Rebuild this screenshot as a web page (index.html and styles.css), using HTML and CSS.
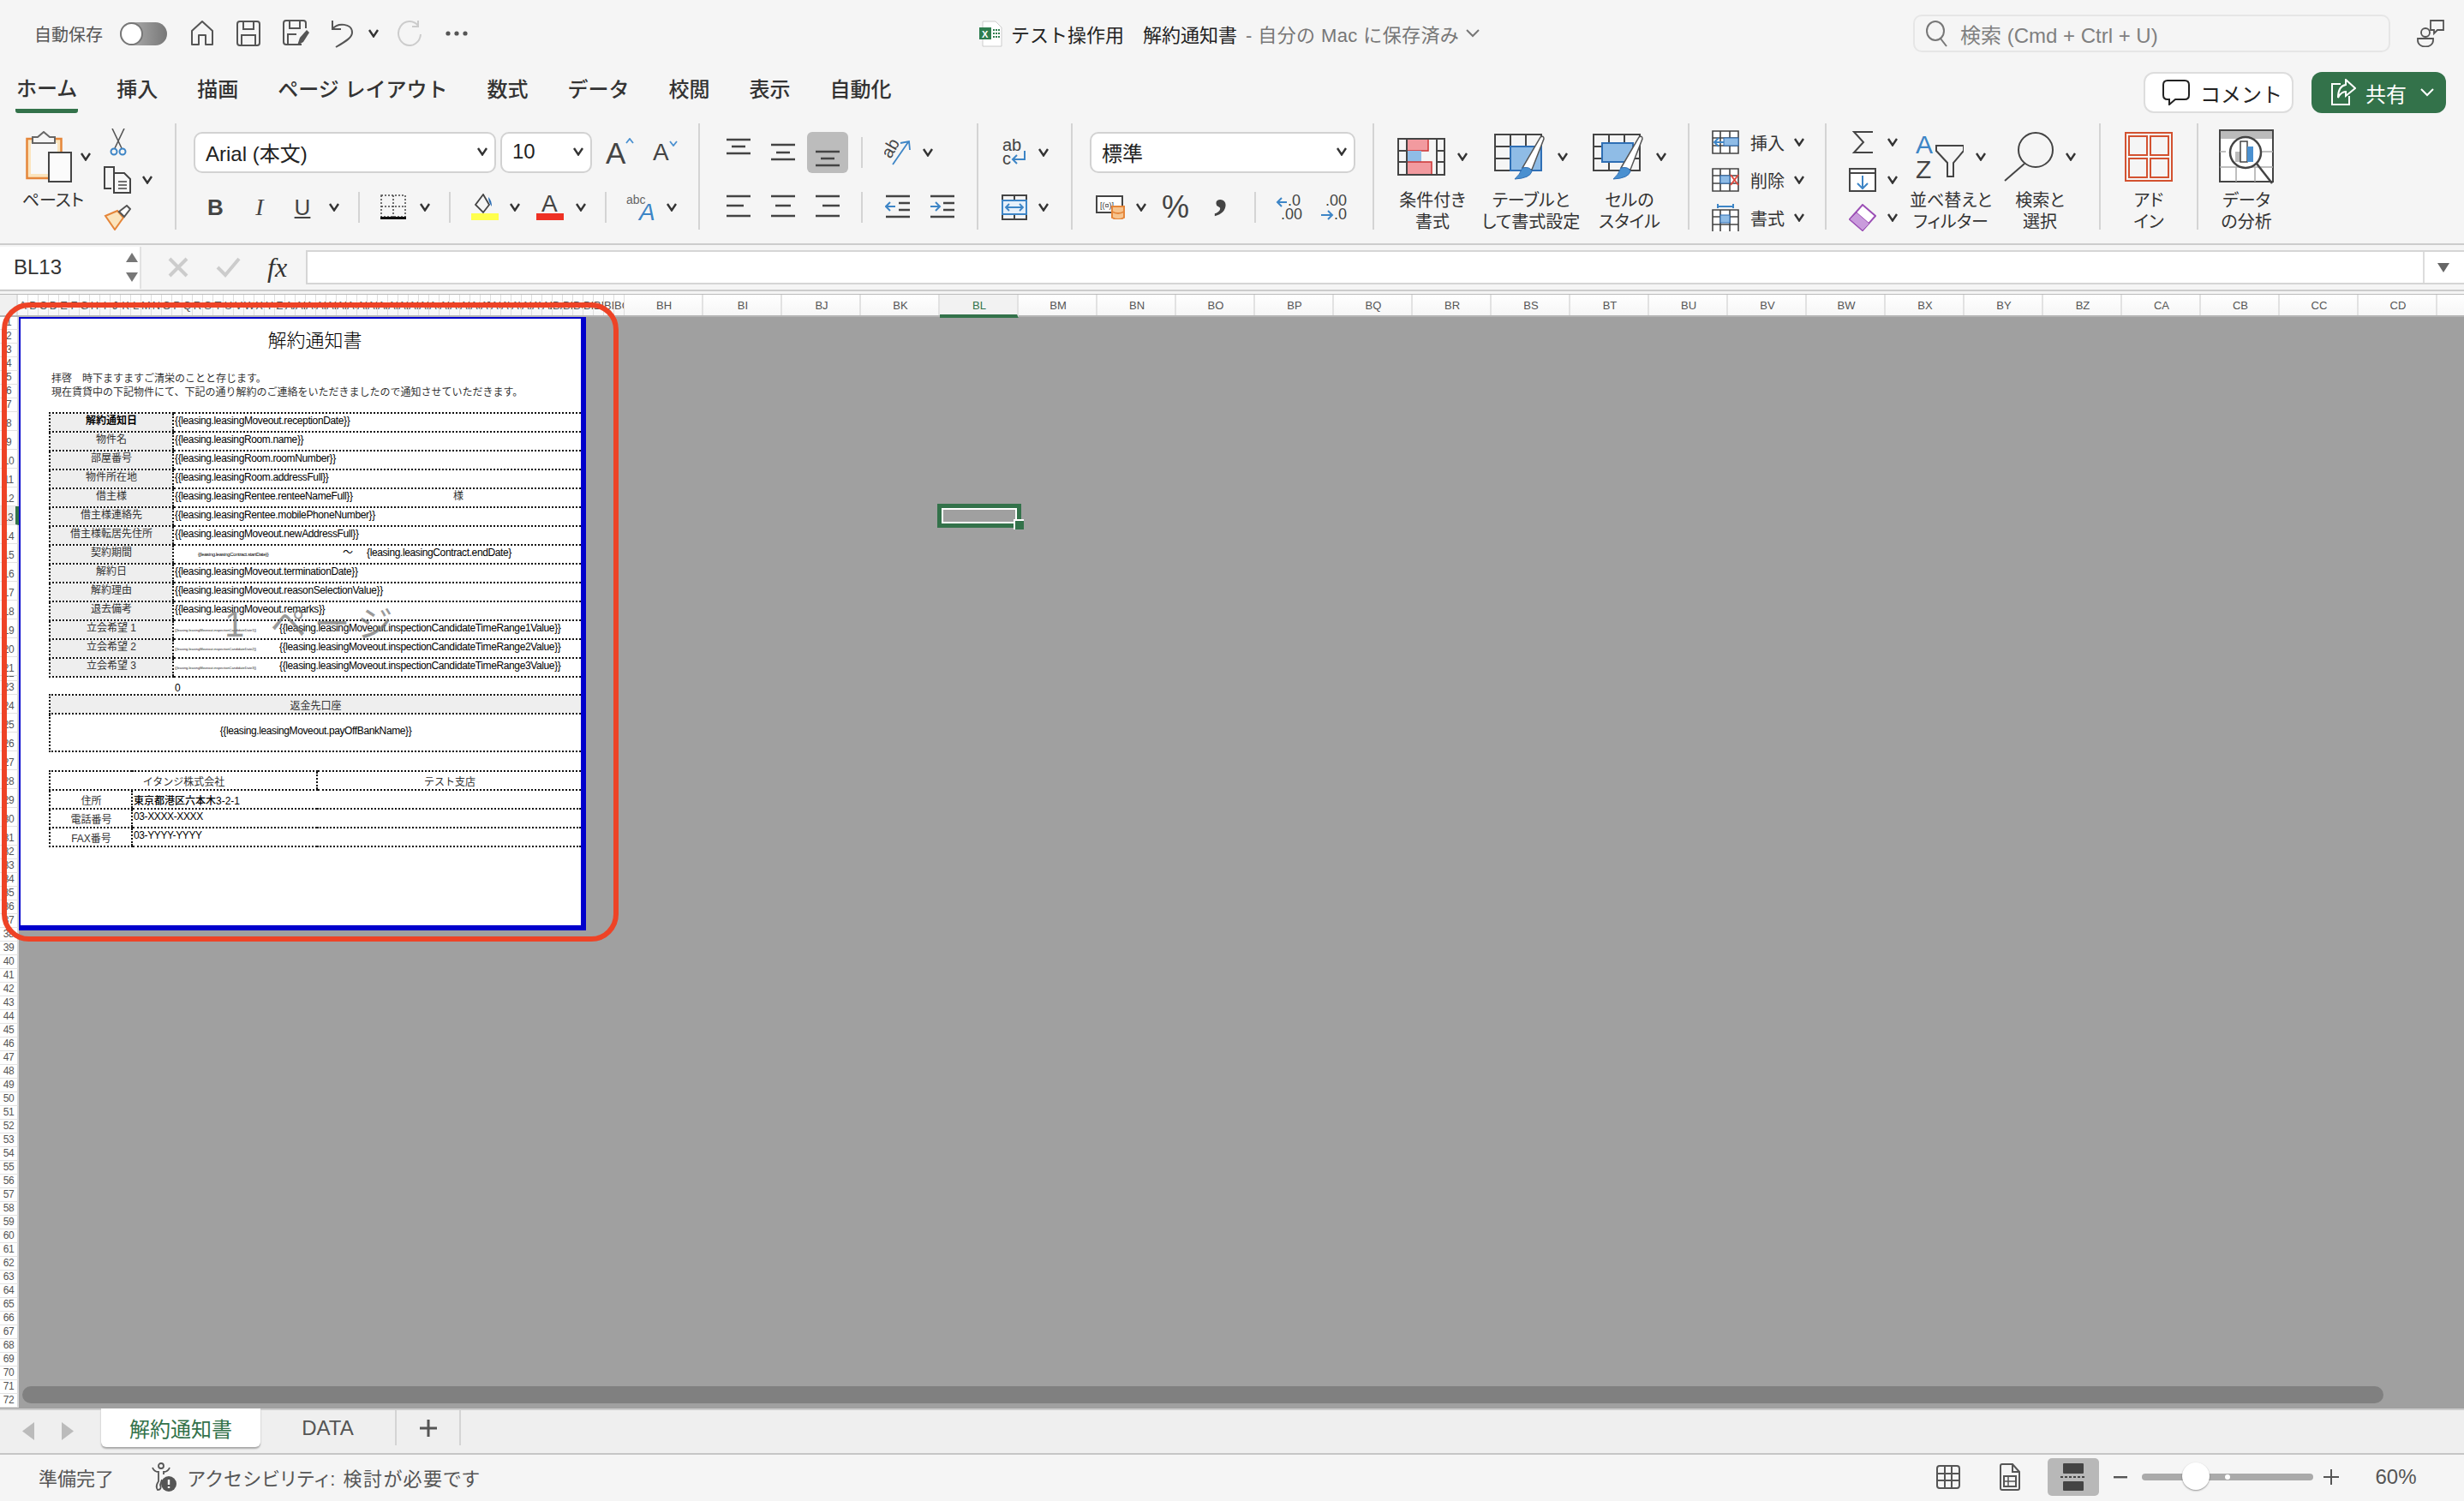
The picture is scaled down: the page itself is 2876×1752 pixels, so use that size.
FILE: index.html
```html
<!DOCTYPE html>
<html lang="ja">
<head>
    <meta charset="UTF-8">
    <title>テスト操作用 解約通知書</title>
    <link rel="stylesheet" href="styles.css">
</head>
<body>
    <svg class="sprite">
        <symbol id="chev" viewBox="0 0 12 10"><path d="M1 1 L6 8.5 L11 1" fill="none" stroke="#333" stroke-width="2.4"/></symbol>
        <symbol id="grid" viewBox="0 0 32 28"><path d="M1 1 H31 V27 H1 Z M1 9 H31 M1 18 H31 M10 1 V27 M21 1 V27" fill="#fff" stroke="#444" stroke-width="1.6"/></symbol>
    </svg>

    <!-- Title bar -->
    <header class="titlebar">
        <div class="quick">
            <span class="autosave">自動保存</span>
            <span class="toggle"><span class="knob"></span></span>
            <svg width="28" height="30" viewBox="0 0 28 30"><path d="M2 28 V12 L14 1 L26 12 V28 H18 V17 H10 V28 Z" fill="none" stroke="#555" stroke-width="2" stroke-linejoin="round"/></svg>
            <svg width="28" height="30" viewBox="0 0 28 30"><path d="M4 1 H24 Q27 1 27 4 V26 Q27 29 24 29 H4 Q1 29 1 26 V4 Q1 1 4 1 Z M8 1 V10 H20 V1 M6 29 V17 H22 V29" fill="none" stroke="#555" stroke-width="2"/></svg>
            <svg width="32" height="32" viewBox="0 0 32 32"><path d="M22 29 H4 Q1 29 1 26 V4 Q1 1 4 1 H24 Q27 1 27 4 V10 M8 1 V10 H20 V1 M6 29 V17 H16" fill="none" stroke="#555" stroke-width="2"/><path d="M17 30 L20 21 L28 12 L31 15 L24 26 Z" fill="#555"/></svg>
            <svg width="26" height="33" viewBox="0 0 26 33"><path d="M2 1 V11 H12 M2 11 C8 3 25 4 25 15 C25 20 20 24 6 32" fill="none" stroke="#555" stroke-width="2"/></svg>
            <svg class="chev"><use href="#chev"/></svg>
            <svg width="28" height="30" viewBox="0 0 28 30"><path d="M24 6 A13 14 0 1 0 27 16 M24 0 V7 H17" fill="none" stroke="#ccc" stroke-width="2"/></svg>
            <svg width="26" height="6" viewBox="0 0 26 6"><circle cx="3" cy="3" r="2.6" fill="#555"/><circle cx="13" cy="3" r="2.6" fill="#555"/><circle cx="23" cy="3" r="2.6" fill="#555"/></svg>
        </div>
        <div class="doc-name">
            <svg width="27" height="31" viewBox="0 0 27 31"><path d="M4 1 H19 L26 8 V30 H4 Z" fill="#fff" stroke="#ccc"/><rect x="0" y="8" width="14" height="14" fill="#2f7d4f"/><text x="3" y="19.500" class="xl-x">X</text><path d="M16 11 H24 M16 15 H24 M16 19 H24" stroke="#2f7d4f" stroke-width="2" stroke-dasharray="2 1"/></svg>
            <span class="doc-file">テスト操作用　解約通知書</span>
            <span class="doc-state">- 自分の Mac に保存済み</span>
            <svg width="16" height="10" viewBox="0 0 16 10"><path d="M1 1 L8 8 L15 1" fill="none" stroke="#777" stroke-width="2"/></svg>
        </div>
        <div class="search">
            <svg width="27" height="32" viewBox="0 0 27 32"><ellipse cx="12" cy="13" rx="10" ry="11" fill="none" stroke="#777" stroke-width="2"/><path d="M18 22 L25 31" stroke="#777" stroke-width="2"/></svg>
            <span>検索 (Cmd + Ctrl + U)</span>
        </div>
        <svg class="people" width="33" height="32" viewBox="0 0 33 32"><circle cx="11" cy="15" r="5" fill="none" stroke="#555" stroke-width="1.8"/><path d="M2 22 H20 V24 C20 34 2 34 2 24 Z" fill="none" stroke="#555" stroke-width="1.8"/><path d="M17 1 H32 V12 H25 L21 16 V12 H17 Z" fill="none" stroke="#555" stroke-width="1.8"/></svg>
    </header>

    <!-- Ribbon tabs -->
    <nav class="tabs">
        <span class="tab active">ホーム</span>
        <span class="tab">挿入</span>
        <span class="tab">描画</span>
        <span class="tab">ページ レイアウト</span>
        <span class="tab">数式</span>
        <span class="tab">データ</span>
        <span class="tab">校閲</span>
        <span class="tab">表示</span>
        <span class="tab">自動化</span>
        <div class="tab-actions">
            <span class="btn-comment">
                <svg width="32" height="30" viewBox="0 0 32 30"><path d="M6 1 H26 Q31 1 31 6 V18 Q31 23 26 23 H15 L8 29 V23 H6 Q1 23 1 18 V6 Q1 1 6 1 Z" fill="none" stroke="#222" stroke-width="2"/></svg>
                コメント
            </span>
            <span class="btn-share">
                <svg width="30" height="32" viewBox="0 0 30 32"><path d="M12 6 H2 V30 H22 V20" fill="none" stroke="#fff" stroke-width="2"/><path d="M18 1 L29 11 L18 20 V15 C13 15 11 18 9 22 C9 14 12 8 18 7 Z" fill="none" stroke="#fff" stroke-width="2"/></svg>
                <span>共有</span>
                <svg width="16" height="10" viewBox="0 0 16 10"><path d="M1 1 L8 8 L15 1" fill="none" stroke="#fff" stroke-width="2"/></svg>
            </span>
        </div>
    </nav>

    <!-- Ribbon -->
    <section class="ribbon">
        <div class="group group-clip">
            <div class="big paste">
                <div class="big-icon">
                    <svg width="54" height="60" viewBox="0 0 54 60"><rect x="1.500" y="9" width="40" height="46" fill="#fbe4bd" stroke="#e5863a" stroke-width="2.500"/><rect x="6" y="14" width="31" height="36" fill="#f8f8f8"/><path d="M8 14 V7 H14 L21 1 L28 7 H34 V14 Z" fill="#f5f5f5" stroke="#666" stroke-width="2"/><rect x="27" y="25" width="26" height="34" fill="#fbfbfb" stroke="#444" stroke-width="2"/></svg>
                    <svg class="chev"><use href="#chev"/></svg>
                </div>
                <div class="big-label">ペースト</div>
            </div>
            <div class="stack clip-tools">
                <div class="stack-row">
                    <svg width="20" height="32" viewBox="0 0 20 32"><path d="M3 0 L14 23 M17 0 L6 23" stroke="#555" stroke-width="1.600"/><circle cx="5" cy="27" r="3.500" fill="none" stroke="#3d85c6" stroke-width="2"/><circle cx="15" cy="27" r="3.500" fill="none" stroke="#3d85c6" stroke-width="2"/></svg>
                </div>
                <div class="stack-row">
                    <svg width="32" height="32" viewBox="0 0 32 32"><path d="M9 26 H1 V1 H12 V8" fill="none" stroke="#444" stroke-width="2"/><path d="M12 8 H24 L31 15 V31 H12 Z" fill="#f8f8f8" stroke="#444" stroke-width="2"/><path d="M17 18 H27 M17 22 H27 M17 26 H27" stroke="#444" stroke-width="1.500"/></svg>
                    <svg class="chev"><use href="#chev"/></svg>
                </div>
                <div class="stack-row">
                    <svg width="32" height="30" viewBox="0 0 32 30"><path d="M2 13 L16 7 L23 15 L13 29 Z" fill="#fbe4bd" stroke="#e5863a" stroke-width="2"/><path d="M18 8 L27 1 L31 5 L24 14 Z" fill="#fff" stroke="#555" stroke-width="2"/></svg>
                </div>
            </div>
        </div>

        <div class="group group-font">
            <div class="font-row1">
                <div class="select select-font">Arial (本文)<svg class="chev"><use href="#chev"/></svg></div>
                <div class="select select-size">10<svg class="chev"><use href="#chev"/></svg></div>
                <div class="step-big">A<svg width="10" height="7" viewBox="0 0 10 7"><path d="M1 6 L5 1 L9 6" fill="none" stroke="#4a90d0" stroke-width="1.800"/></svg></div>
                <div class="step-small">A<svg width="10" height="7" viewBox="0 0 10 7"><path d="M1 1 L5 6 L9 1" fill="none" stroke="#4a90d0" stroke-width="1.800"/></svg></div>
            </div>
            <div class="font-row2">
                <span class="fmt-b">B</span>
                <span class="fmt-i">I</span>
                <span class="fmt-u">U</span>
                <svg class="chev"><use href="#chev"/></svg>
                <i class="vsep"></i>
                <svg width="30" height="30" viewBox="0 0 30 30"><path d="M1 1 H29 V26 H1 Z M15 1 V26 M1 14 H29" fill="none" stroke="#444" stroke-width="1.500" stroke-dasharray="2 2"/><rect x="0" y="26" width="30" height="3" fill="#111"/></svg>
                <svg class="chev"><use href="#chev"/></svg>
                <i class="vsep"></i>
                <svg width="32" height="32" viewBox="0 0 32 32"><path d="M14 1 L5 13 L14 22 L21 13 Z" fill="none" stroke="#444" stroke-width="1.800"/><path d="M20 4 Q24 8 24 15 Q20 10 20 4 Z" fill="#2f6fb5"/><rect x="0" y="23" width="32" height="8" fill="#ffff4d"/></svg>
                <svg class="chev"><use href="#chev"/></svg>
                <svg width="32" height="32" viewBox="0 0 32 32"><text x="6" y="21" class="ico-a">A</text><rect x="0" y="23" width="32" height="8" fill="#ee3124"/></svg>
                <svg class="chev"><use href="#chev"/></svg>
                <i class="vsep"></i>
                <svg width="34" height="32" viewBox="0 0 34 32"><text x="0" y="12" class="ico-abc">abc</text><text x="15" y="31" class="ico-abc-a">A</text></svg>
                <svg class="chev"><use href="#chev"/></svg>
            </div>
        </div>

        <div class="group group-align">
            <div class="align-row1">
                <svg width="28" height="48" viewBox="0 0 28 48"><path d="M0 9 H28 M6 17 H22 M0 25 H28" stroke="#444" stroke-width="2.400"/></svg>
                <svg width="28" height="48" viewBox="0 0 28 48"><path d="M0 15 H28 M6 24 H22 M0 32 H28" stroke="#444" stroke-width="2.400"/></svg>
                <span class="align-active"><svg width="28" height="48" viewBox="0 0 28 48"><path d="M0 23 H28 M6 31 H22 M0 39 H28" stroke="#444" stroke-width="2.400"/></svg></span>
                <i class="vsep"></i>
                <svg width="32" height="30" viewBox="0 0 32 30"><text x="0" y="18" class="ico-rot" transform="rotate(-60 8 14)">ab</text><path d="M10 29 L28 3 M19 4 L29 2 L30 12" fill="none" stroke="#3d85c6" stroke-width="1.800"/></svg>
                <svg class="chev"><use href="#chev"/></svg>
            </div>
            <div class="align-row2">
                <svg width="28" height="36" viewBox="0 0 28 36"><path d="M0 5 H28 M0 16 H20 M0 28 H28" stroke="#444" stroke-width="2.400"/></svg>
                <svg width="28" height="36" viewBox="0 0 28 36"><path d="M0 5 H28 M5 16 H23 M0 28 H28" stroke="#444" stroke-width="2.400"/></svg>
                <svg width="28" height="36" viewBox="0 0 28 36"><path d="M0 5 H28 M8 16 H28 M0 28 H28" stroke="#444" stroke-width="2.400"/></svg>
                <i class="vsep"></i>
                <svg width="30" height="36" viewBox="0 0 30 36"><path d="M1 5 H29 M16 13 H29 M16 21 H29 M1 29 H29" stroke="#444" stroke-width="2.400"/><path d="M12 17 H1 M6 12 L1 17 L6 22" fill="none" stroke="#3d85c6" stroke-width="2"/></svg>
                <svg width="30" height="36" viewBox="0 0 30 36"><path d="M1 5 H29 M16 13 H29 M16 21 H29 M1 29 H29" stroke="#444" stroke-width="2.400"/><path d="M1 17 H12 M7 12 L12 17 L7 22" fill="none" stroke="#3d85c6" stroke-width="2"/></svg>
            </div>
        </div>

        <div class="group group-wrap">
            <div class="wrap-row1">
                <svg width="28" height="32" viewBox="0 0 28 32"><text x="0" y="14" class="ico-wrap">ab</text><text x="0" y="30" class="ico-wrap">c</text><path d="M26 14 V24 H12 M17 19 L12 24 L17 29" fill="none" stroke="#3d85c6" stroke-width="2"/></svg>
                <svg class="chev"><use href="#chev"/></svg>
            </div>
            <div class="wrap-row2">
                <svg width="30" height="30" viewBox="0 0 30 30"><path d="M1 1 H29 V29 H1 Z M15 1 V7 M15 23 V29" fill="none" stroke="#444" stroke-width="2"/><rect x="1" y="7" width="28" height="16" fill="#e6f0fa" stroke="#3d85c6" stroke-width="2"/><path d="M5 15 H25 M9 11 L5 15 L9 19 M21 11 L25 15 L21 19" fill="none" stroke="#3d85c6" stroke-width="1.800"/></svg>
                <svg class="chev"><use href="#chev"/></svg>
            </div>
        </div>

        <div class="group group-number">
            <div class="select select-num">標準<svg class="chev"><use href="#chev"/></svg></div>
            <div class="num-row2">
                <svg width="34" height="28" viewBox="0 0 34 28"><rect x="1" y="1" width="30" height="19" fill="#fff" stroke="#444" stroke-width="2"/><text x="5" y="15" class="ico-cur">[(¤)]</text><path d="M19 13 H33 V26 Q26 30 19 26 Z" fill="#f6c48f" stroke="#e5863a" stroke-width="2"/><path d="M19 19 Q26 23 33 19" fill="none" stroke="#e5863a" stroke-width="2"/></svg>
                <svg class="chev"><use href="#chev"/></svg>
                <span class="pct">%</span>
                <span class="comma">,</span>
                <i class="vsep"></i>
                <svg width="32" height="32" viewBox="0 0 32 32"><text x="14" y="14" class="ico-dec">.0</text><text x="6" y="30" class="ico-dec">.00</text><path d="M13 10 H2 M7 5 L2 10 L7 15" fill="none" stroke="#3d85c6" stroke-width="2"/></svg>
                <svg width="32" height="32" viewBox="0 0 32 32"><text x="6" y="14" class="ico-dec">.00</text><text x="16" y="30" class="ico-dec">.0</text><path d="M1 25 H14 M9 20 L14 25 L9 30" fill="none" stroke="#3d85c6" stroke-width="2"/></svg>
            </div>
        </div>

        <div class="group group-styles">
            <div class="big big-cond">
                <div class="big-icon">
                    <svg width="56" height="44" viewBox="0 0 56 44"><rect x="11" y="1" width="25" height="14" fill="#f29a9f" stroke="#c33" stroke-width="1.500"/><rect x="11" y="15" width="17" height="13" fill="#8fbce6"/><rect x="11" y="28" width="29" height="15" fill="#f29a9f" stroke="#c33" stroke-width="1.500"/><path d="M1 1 H55 V43 H1 Z M11 1 V43 M46 1 V43 M1 15 H11 M1 28 H11 M46 15 H55 M46 28 H55" fill="none" stroke="#444" stroke-width="2"/></svg>
                    <svg class="chev"><use href="#chev"/></svg>
                </div>
                <div class="big-label">条件付き<br>書式</div>
            </div>
            <div class="big big-table">
                <div class="big-icon">
                    <svg width="60" height="54" viewBox="0 0 60 54"><path d="M1 1 H55 V43 H1 Z M1 15 H55 M1 29 H55 M19 1 V43 M37 1 V43" fill="none" stroke="#444" stroke-width="2"/><rect x="19" y="15" width="36" height="28" fill="#8fbce6" stroke="#2f6fb5" stroke-width="2"/><path d="M33 40 L54 4 Q58 2 58 6 L44 42 Z" fill="#fff" stroke="#555" stroke-width="1.500"/><path d="M33 40 Q42 38 44 44 Q42 52 24 53 Q30 48 33 40 Z" fill="#4a90d0" stroke="#2f6fb5"/></svg>
                    <svg class="chev"><use href="#chev"/></svg>
                </div>
                <div class="big-label">テーブルと<br>して書式設定</div>
            </div>
            <div class="big big-table">
                <div class="big-icon">
                    <svg width="60" height="54" viewBox="0 0 60 54"><path d="M1 1 H55 V43 H1 Z M1 15 H55 M1 29 H55 M19 1 V43 M37 1 V43" fill="none" stroke="#444" stroke-width="2"/><rect x="11" y="11" width="36" height="22" fill="#8fbce6" stroke="#2f6fb5" stroke-width="2"/><path d="M33 40 L54 4 Q58 2 58 6 L44 42 Z" fill="#fff" stroke="#555" stroke-width="1.500"/><path d="M33 40 Q42 38 44 44 Q42 52 24 53 Q30 48 33 40 Z" fill="#4a90d0" stroke="#2f6fb5"/></svg>
                    <svg class="chev"><use href="#chev"/></svg>
                </div>
                <div class="big-label">セルの<br>スタイル</div>
            </div>
        </div>

        <div class="group group-cells">
            <div class="stack">
                <div class="stack-row">
                    <svg width="32" height="28" viewBox="0 0 32 28"><use href="#grid"/><rect x="14" y="9" width="17" height="9" fill="#8fbce6" stroke="#2f6fb5"/><path d="M14 14 H3 M8 9 L3 14 L8 19" fill="none" stroke="#3d85c6" stroke-width="2"/></svg>
                    <span class="cell-label">挿入</span>
                    <svg class="chev"><use href="#chev"/></svg>
                </div>
                <div class="stack-row">
                    <svg width="32" height="28" viewBox="0 0 32 28"><use href="#grid"/><rect x="10" y="9" width="11" height="9" fill="#8fbce6" stroke="#2f6fb5"/><path d="M22 8 L31 20 M31 8 L22 20" stroke="#e04a3f" stroke-width="2"/></svg>
                    <span class="cell-label">削除</span>
                    <svg class="chev"><use href="#chev"/></svg>
                </div>
                <div class="stack-row">
                    <svg width="32" height="32" viewBox="0 0 32 32"><g transform="translate(0 4)"><use href="#grid"/></g><rect x="10" y="13" width="11" height="9" fill="#8fbce6" stroke="#2f6fb5"/><path d="M7 3 H25 M7 0 V5 M25 0 V5" stroke="#3d85c6" stroke-width="2"/></svg>
                    <span class="cell-label">書式</span>
                    <svg class="chev"><use href="#chev"/></svg>
                </div>
            </div>
        </div>

        <div class="group group-edit">
            <div class="stack">
                <div class="stack-row">
                    <svg width="32" height="28" viewBox="0 0 32 28"><path d="M28 2 H6 L17 14 L6 26 H28" fill="none" stroke="#444" stroke-width="2"/></svg>
                    <svg class="chev"><use href="#chev"/></svg>
                </div>
                <div class="stack-row">
                    <svg width="32" height="28" viewBox="0 0 32 28"><path d="M1 1 H31 V27 H1 Z M1 6 H31" fill="#fff" stroke="#444" stroke-width="2"/><path d="M16 9 V24 M10 18 L16 24 L22 18" fill="none" stroke="#3d85c6" stroke-width="2"/></svg>
                    <svg class="chev"><use href="#chev"/></svg>
                </div>
                <div class="stack-row">
                    <svg width="32" height="32" viewBox="0 0 32 32"><path d="M16 1 L31 14 L16 31 L1 18 Z" fill="#fff" stroke="#9b4fb5" stroke-width="2"/><path d="M1 18 L9 10 L24 23 L16 31 Z" fill="#c99bdc" stroke="#9b4fb5" stroke-width="1"/></svg>
                    <svg class="chev"><use href="#chev"/></svg>
                </div>
            </div>
            <div class="big big-sort">
                <div class="big-icon">
                    <svg width="56" height="54" viewBox="0 0 56 54"><text x="0" y="23" class="ico-sort-a">A</text><text x="0" y="52" class="ico-sort-z">Z</text><path d="M24 14 H56 V20 L44 34 V50 H37 V34 L24 20 Z" fill="none" stroke="#444" stroke-width="2"/></svg>
                    <svg class="chev"><use href="#chev"/></svg>
                </div>
                <div class="big-label">並べ替えと<br>フィルター</div>
            </div>
            <div class="big big-find">
                <div class="big-icon">
                    <svg width="58" height="58" viewBox="0 0 58 58"><ellipse cx="37" cy="21" rx="20" ry="20" fill="none" stroke="#444" stroke-width="2"/><path d="M24 37 L1 57" stroke="#444" stroke-width="2"/></svg>
                    <svg class="chev"><use href="#chev"/></svg>
                </div>
                <div class="big-label">検索と<br>選択</div>
            </div>
        </div>

        <div class="group group-addin">
            <div class="big">
                <div class="big-icon">
                    <svg width="56" height="58" viewBox="0 0 56 58"><rect x="1" y="1" width="54" height="56" fill="none" stroke="#d35230" stroke-width="2"/><path d="M5 5 H26 V27 H5 Z M30 5 H51 V27 H30 Z M5 31 H26 V53 H5 Z M30 31 H51 V53 H30 Z" fill="none" stroke="#d35230" stroke-width="2"/></svg>
                </div>
                <div class="big-label">アド<br>イン</div>
            </div>
        </div>

        <div class="group group-data">
            <div class="big">
                <div class="big-icon">
                    <svg width="64" height="64" viewBox="0 0 64 64"><rect x="1" y="1" width="62" height="60" fill="#fff" stroke="#444" stroke-width="2"/><rect x="2" y="2" width="60" height="9" fill="#bbb"/><path d="M1 26 H8 M50 26 H63 M1 44 H63 M20 44 V61 M42 44 V61" stroke="#aaa" stroke-width="1.500"/><circle cx="31" cy="27" r="18" fill="#fff" stroke="#444" stroke-width="2.500"/><rect x="19" y="26" width="8" height="12" fill="#bbb"/><rect x="25" y="14" width="8" height="24" fill="#fff" stroke="#444" stroke-width="1.500"/><rect x="33" y="20" width="7" height="18" fill="#4a90d0"/><path d="M44 40 L62 63" stroke="#444" stroke-width="2.500"/></svg>
                </div>
                <div class="big-label">データ<br>の分析</div>
            </div>
        </div>
    </section>

    <!-- Formula bar -->
    <section class="formula">
        <div class="namebox">
            <span>BL13</span>
            <svg width="14" height="36" viewBox="0 0 14 36"><path d="M7 1 L14 12 H0 Z M7 35 L14 24 H0 Z" fill="#777"/></svg>
        </div>
        <svg class="fx-cancel" width="26" height="24" viewBox="0 0 26 24"><path d="M3 2 L23 22 M23 2 L3 22" stroke="#ccc" stroke-width="4"/></svg>
        <svg class="fx-ok" width="29" height="24" viewBox="0 0 29 24"><path d="M2 12 L11 21 L27 2" fill="none" stroke="#ccc" stroke-width="4"/></svg>
        <span class="fx">fx</span>
        <div class="formula-input">
            <span class="formula-drop"><svg width="14" height="11" viewBox="0 0 14 11"><path d="M0 0 H14 L7 11 Z" fill="#666"/></svg></span>
        </div>
    </section>

    <!-- Sheet -->
    <main class="workbook">
        <div class="colhead">
            <div class="cols">
                <span class="corner"></span>
                <div class="tiny-cols"><span>A</span><span>B</span><span>C</span><span>D</span><span>E</span><span>F</span><span>G</span><span>H</span><span>I</span><span>J</span><span>K</span><span>L</span><span>M</span><span>N</span><span>O</span><span>P</span><span>Q</span><span>R</span><span>S</span><span>T</span><span>U</span><span>V</span><span>W</span><span>X</span><span>Y</span><span>Z</span><span>AA</span><span>AB</span><span>AC</span><span>AD</span><span>AE</span><span>AF</span><span>AG</span><span>AH</span><span>AI</span><span>AJ</span><span>AK</span><span>AL</span><span>AM</span><span>AN</span><span>AO</span><span>AP</span><span>AQ</span><span>AR</span><span>AS</span><span>AT</span><span>AU</span><span>AV</span><span>AW</span><span>AX</span><span>AY</span><span>AZ</span><span>BA</span><span>BB</span><span>BC</span><span>BD</span><span>BE</span><span>BF</span><span>BG</span></div>
                <span class="col">BH</span><span class="col">BI</span><span class="col">BJ</span><span class="col">BK</span><span class="col col-active">BL</span><span class="col">BM</span><span class="col">BN</span><span class="col">BO</span><span class="col">BP</span><span class="col">BQ</span><span class="col">BR</span><span class="col">BS</span><span class="col">BT</span><span class="col">BU</span><span class="col">BV</span><span class="col">BW</span><span class="col">BX</span><span class="col">BY</span><span class="col">BZ</span><span class="col">CA</span><span class="col">CB</span><span class="col">CC</span><span class="col">CD</span>
            </div>
        </div>
        <div class="sheet">
            <div class="rows">
                <span class="r15">1</span><span>2</span><span>3</span><span>4</span><span>5</span><span>6</span><span>7</span>
                <span class="r22">8</span><span class="r22">9</span><span class="r22">10</span><span class="r22">11</span><span class="r22">12</span><span class="r22 row-active">13</span><span class="r22">14</span><span class="r22">15</span><span class="r22">16</span><span class="r22">17</span><span class="r22">18</span><span class="r22">19</span><span class="r22">20</span><span class="r22">21</span>
                <span class="r6">22</span><span>23</span>
                <span class="r22">24</span><span class="r22">25</span><span class="r22">26</span><span class="r22">27</span><span class="r22">28</span><span class="r22">29</span><span class="r22">30</span><span class="r22">31</span>
                <span>32</span><span>33</span><span>34</span><span>35</span><span>36</span><span>37</span><span>38</span><span>39</span><span>40</span><span>41</span><span>42</span><span>43</span><span>44</span><span>45</span><span>46</span><span>47</span><span>48</span><span>49</span><span>50</span><span>51</span><span>52</span><span>53</span><span>54</span><span>55</span><span>56</span><span>57</span><span>58</span><span>59</span><span>60</span><span>61</span><span>62</span><span>63</span><span>64</span><span>65</span><span>66</span><span>67</span><span>68</span><span>69</span><span>70</span><span>71</span><span>72</span>
            </div>
            <div class="page">
                <h1 class="doc-title">解約通知書</h1>
                <p class="doc-intro">拝啓　時下ますますご清栄のことと存じます。<br>現在賃貸中の下記物件にて、下記の通り解約のご連絡をいただきましたので通知させていただきます。</p>
                <table class="doc-table">
                    <colgroup><col class="col-label"><col></colgroup>
                    <tr><th class="strong">解約通知日</th><td>{{leasing.leasingMoveout.receptionDate}}</td></tr>
                    <tr><th>物件名</th><td>{{leasing.leasingRoom.name}}</td></tr>
                    <tr><th>部屋番号</th><td>{{leasing.leasingRoom.roomNumber}}</td></tr>
                    <tr><th>物件所在地</th><td>{{leasing.leasingRoom.addressFull}}</td></tr>
                    <tr><th>借主様</th><td><span class="name-val">{{leasing.leasingRentee.renteeNameFull}}</span><span class="label-text">様</span></td></tr>
                    <tr><th>借主様連絡先</th><td>{{leasing.leasingRentee.mobilePhoneNumber}}</td></tr>
                    <tr><th>借主様転居先住所</th><td>{{leasing.leasingMoveout.newAddressFull}}</td></tr>
                    <tr><th>契約期間</th><td class="term"><span class="term-start">{{leasing.leasingContract.startDate}}</span><span class="term-sep">〜</span><span>{leasing.leasingContract.endDate}</span></td></tr>
                    <tr><th>解約日</th><td>{{leasing.leasingMoveout.terminationDate}}</td></tr>
                    <tr><th>解約理由</th><td>{{leasing.leasingMoveout.reasonSelectionValue}}</td></tr>
                    <tr><th>退去備考</th><td>{{leasing.leasingMoveout.remarks}}</td></tr>
                    <tr><th>立会希望 1</th><td><span class="tiny">{{leasing.leasingMoveout.inspectionCandidateDate1}}</span>{{leasing.leasingMoveout.inspectionCandidateTimeRange1Value}}</td></tr>
                    <tr><th>立会希望 2</th><td><span class="tiny">{{leasing.leasingMoveout.inspectionCandidateDate2}}</span>{{leasing.leasingMoveout.inspectionCandidateTimeRange2Value}}</td></tr>
                    <tr><th>立会希望 3</th><td><span class="tiny">{{leasing.leasingMoveout.inspectionCandidateDate3}}</span>{{leasing.leasingMoveout.inspectionCandidateTimeRange3Value}}</td></tr>
                </table>
                <div class="doc-zero">0</div>
                <table class="doc-table bank-table">
                    <tr><th class="low">返金先口座</th></tr>
                    <tr class="bank-row"><td class="bank-name">{{leasing.leasingMoveout.payOffBankName}}</td></tr>
                </table>
                <table class="doc-table company-table">
                    <colgroup><col class="col-co-label"><col class="col-co-rest"><col></colgroup>
                    <tr><td colspan="2" class="low label-text">イタンジ株式会社</td><td class="low label-text">テスト支店</td></tr>
                    <tr><td class="low label-text">住所</td><td colspan="2" class="addr">東京都港区六本木3-2-1</td></tr>
                    <tr><td class="low label-text">電話番号</td><td colspan="2">03-XXXX-XXXX</td></tr>
                    <tr><td class="low label-text">FAX番号</td><td colspan="2">03-YYYY-YYYY</td></tr>
                </table>
                <div class="watermark">1 ページ</div>
            </div>
        </div>
        <!-- overlays -->
        <div class="red-frame"></div>
        <div class="selected"><span class="handle"></span></div>
        <div class="hscroll"></div>
    </main>

    <!-- Sheet tabs -->
    <section class="sheet-tabs">
        <svg class="arrow-l" width="14" height="21" viewBox="0 0 14 21"><path d="M14 0 V21 L0 10.500 Z" fill="#bbb"/></svg>
        <svg class="arrow-r" width="14" height="21" viewBox="0 0 14 21"><path d="M0 0 V21 L14 10.500 Z" fill="#bbb"/></svg>
        <span class="sheet-tab active">解約通知書</span>
        <span class="sheet-tab data">DATA</span>
        <span class="sheet-tab add"><svg width="20" height="20" viewBox="0 0 20 20"><path d="M10 0 V20 M0 10 H20" stroke="#555" stroke-width="3"/></svg></span>
    </section>

    <!-- Status bar -->
    <footer class="status">
        <span class="ready">準備完了</span>
        <svg class="a11y" width="30" height="34" viewBox="0 0 30 34"><circle cx="12" cy="4" r="3" fill="none" stroke="#555" stroke-width="1.800"/><path d="M2 6 Q4 11 9 11 V22 Q5 28 8 32 Q13 32 11 26 L13 20 M22 6 Q20 11 15 11 V14" fill="none" stroke="#555" stroke-width="1.800"/><circle cx="21" cy="25" r="9" fill="#555"/><path d="M21 20 V26 M21 28 V30" stroke="#fff" stroke-width="2.400"/></svg>
        <span class="a11y-text">アクセシビリティ: 検討が必要です</span>
        <div class="status-right">
            <svg width="28" height="28" viewBox="0 0 28 28"><rect x="1" y="1" width="26" height="26" rx="3" fill="none" stroke="#555" stroke-width="2"/><path d="M1 10 H27 M1 18 H27 M10 1 V27 M18 1 V27" stroke="#555" stroke-width="2"/></svg>
            <svg width="24" height="32" viewBox="0 0 24 32"><path d="M3 1 H15 L23 10 V29 Q23 31 21 31 H3 Q1 31 1 29 V3 Q1 1 3 1 Z M15 1 V10 H23" fill="none" stroke="#555" stroke-width="2"/><rect x="5" y="15" width="14" height="12" fill="none" stroke="#555" stroke-width="2"/><path d="M5 21 H19 M10 15 V27" stroke="#555" stroke-width="1.500"/></svg>
            <span class="view-active"><svg width="32" height="32" viewBox="0 0 32 32"><rect x="4" y="0" width="24" height="12" rx="1" fill="#444"/><path d="M1 16 H31" stroke="#444" stroke-width="2" stroke-dasharray="3 2"/><rect x="4" y="21" width="24" height="11" rx="1" fill="#444"/></svg></span>
            <svg width="16" height="3" viewBox="0 0 16 3"><rect width="16" height="2.400" fill="#555"/></svg>
            <div class="zoom-track"><span class="zoom-tick"></span><span class="zoom-knob"></span></div>
            <svg width="18" height="18" viewBox="0 0 18 18"><path d="M9 0 V18 M0 9 H18" stroke="#555" stroke-width="2"/></svg>
            <span class="zoom-value">60%</span>
        </div>
    </footer>
</body>
</html>
```

FILE: styles.css
```css
/* General */
* {
    box-sizing: border-box;
}

body {
    margin: 0;
    width: 2876px;
    height: 1752px;
    overflow: hidden;
    display: flex;
    flex-direction: column;
    background-color: #f5f5f5;
    color: #333;
    font-family: "Liberation Sans", "Noto Sans CJK JP", sans-serif;
    font-feature-settings: "palt";
}

.sprite {
    display: none;
}

.chev {
    width: 12px;
    height: 10px;
}

.vsep {
    display: block;
    width: 2px;
    height: 36px;
    background-color: #d4d4d4;
}

/* Title bar */
.titlebar {
    height: 78px;
    flex: none;
    display: flex;
    align-items: center;
}

.quick {
    width: 1143px;
    padding-left: 40px;
    display: grid;
    grid-template-columns: 100px 82px 54px 54px 56px 44px 34px 56px auto;
    align-items: center;
    justify-items: start;
}

.autosave {
    font-size: 20px;
    color: #555;
}

.toggle {
    display: block;
    width: 55px;
    height: 27px;
    border-radius: 14px;
    background: linear-gradient(90deg, #bbb, #777);
}

.knob {
    display: block;
    width: 27px;
    height: 27px;
    border-radius: 50%;
    background-color: #fff;
    border: 2px solid #777;
}

.doc-name {
    width: 1090px;
    display: flex;
    align-items: center;
    font-size: 22px;
    font-feature-settings: normal;
}

.doc-file {
    margin-left: 10px;
    color: #222;
}

.doc-state {
    margin-left: 10px;
    margin-right: 8px;
    color: #777;
    letter-spacing: 0.4px;
}

.search {
    width: 557px;
    height: 44px;
    display: flex;
    align-items: center;
    gap: 14px;
    padding-left: 12px;
    border: 2px solid #e6e6e6;
    border-radius: 10px;
    font-size: 24px;
    color: #808080;
}

.people {
    margin-left: 30px;
}

/* Ribbon tabs */
.tabs {
    height: 66px;
    flex: none;
    display: flex;
    align-items: flex-start;
    gap: 46px;
    padding-left: 19px;
    font-size: 24px;
    font-weight: 500;
    font-feature-settings: normal;
}

.tab {
    height: 54px;
    line-height: 54px;
}

.tab.active {
    border-bottom: 5px solid #33724a;
    margin: 0 -1px;
    padding: 2px 1px 0;
    line-height: 47px;
    border-radius: 3px;
}

.tab-actions {
    margin-left: auto;
    margin-right: 21px;
    margin-top: 6px;
    display: flex;
    gap: 21px;
}

.btn-comment {
    width: 175px;
    height: 48px;
    display: flex;
    align-items: center;
    gap: 12px;
    padding-left: 20px;
    background-color: #fff;
    border: 2px solid #ddd;
    border-radius: 12px;
    font-weight: 400;
    color: #222;
}

.btn-share {
    width: 157px;
    height: 48px;
    display: flex;
    align-items: center;
    padding-left: 22px;
    background-color: #33724a;
    border-radius: 12px;
    color: #fff;
    font-weight: 400;
}

.btn-share span {
    margin: 0 16px 0 11px;
}

/* Ribbon */
.ribbon {
    height: 140px;
    flex: none;
    display: flex;
    font-size: 20px;
}

.group {
    height: 124px;
    flex: none;
    border-right: 2px solid #d4d4d4;
}

.group-clip {
    width: 206px;
    display: flex;
    padding-left: 24px;
}

.group-font {
    width: 611px;
    padding-top: 10px;
}

.group-align {
    width: 325px;
    padding: 10px 0 0 19px;
}

.group-wrap {
    width: 110px;
    padding: 10px 0 0 18px;
}

.group-number {
    width: 352px;
    padding: 10px 0 0 20px;
}

.group-styles {
    width: 368px;
    display: flex;
    padding-left: 18px;
}

.group-cells {
    width: 160px;
    padding-left: 26px;
}

.group-edit {
    width: 320px;
    display: flex;
    padding-left: 26px;
}

.group-addin {
    width: 114px;
}

.group-addin .big,
.group-data .big {
    width: 112px;
}

.group-data {
    width: 110px;
    border-right: none;
}

/* Large buttons: icon on top, two lines of label below */
.big {
    display: flex;
    flex-direction: column;
    align-items: center;
    padding-top: 6px;
    flex: none;
}

.big-icon {
    height: 66px;
    flex: none;
    display: flex;
    align-items: center;
    gap: 14px;
}

.big-label {
    margin-top: 6px;
    line-height: 25px;
    flex: none;
    text-align: center;
    white-space: nowrap;
}

.paste {
    width: 82px;
}

.paste .big-icon {
    gap: 10px;
    margin-left: 6px;
}

.paste .big-label {
    margin-right: 6px;
}

.big-cond {
    width: 100px;
    margin-right: 8px;
}

.big-table {
    width: 114px;
    margin-right: 1px;
}

.big-sort {
    width: 100px;
    margin-left: 12px;
}

.big-find {
    width: 100px;
    margin-left: 4px;
}

/* Three small rows stacked */
.stack-row {
    height: 44px;
    display: flex;
    align-items: center;
    gap: 13px;
}

.clip-tools {
    margin-left: 15px;
    width: 60px;
}

.clip-tools .stack-row:first-child svg {
    margin-left: 7px;
}

.cell-label {
    width: 38px;
    white-space: nowrap;
}

.select {
    height: 48px;
    display: flex;
    align-items: center;
    justify-content: space-between;
    background-color: #fff;
    border: 2px solid #d2d2d2;
    border-radius: 10px;
    padding: 0 8px 2px 12px;
    font-size: 24px;
    color: #222;
}

/* Font group */
.font-row1 {
    display: flex;
    align-items: center;
    padding-left: 20px;
}

.select-font {
    width: 353px;
    margin-right: 5px;
}

.select-size {
    width: 107px;
    margin-right: 16px;
}

.step-big,
.step-small {
    display: flex;
    align-items: flex-start;
    font-weight: 400;
    line-height: 1;
    color: #444;
}

.step-big {
    width: 55px;
    font-size: 35px;
}

.step-small {
    font-size: 28px;
}

.font-row2 {
    margin-top: 22px;
    height: 36px;
    display: grid;
    grid-template-columns: 51px 52px 48px 26px 32px 48px 26px 32px 50px 20px 62px 10px 48px 34px 38px;
    align-items: center;
    justify-items: center;
    padding-left: 20px;
}

.fmt-b {
    font-size: 26px;
    font-weight: 700;
    color: #444;
}

.fmt-i {
    font-family: "Liberation Serif", serif;
    font-style: italic;
    font-size: 28px;
    color: #444;
}

.fmt-u {
    font-size: 26px;
    text-decoration: underline;
    color: #444;
}

.ico-a {
    font-size: 28px;
    fill: #444;
}

.ico-abc {
    font-size: 14px;
    fill: #666;
}

.ico-abc-a {
    font-size: 28px;
    font-style: italic;
    fill: #3d85c6;
}

/* Alignment group */
.align-row1,
.align-row2 {
    display: grid;
    align-items: center;
    justify-items: center;
}

.align-row1 {
    grid-template-columns: 52px 52px 52px 28px 56px 14px;
    height: 48px;
}

.align-row2 {
    grid-template-columns: 52px 52px 52px 28px 55px 50px;
    height: 36px;
    margin-top: 22px;
}

.align-active {
    width: 48px;
    height: 48px;
    display: flex;
    justify-content: center;
    background-color: #bcbcbc;
    border-radius: 6px;
}

.ico-rot {
    font-size: 20px;
    fill: #444;
}

/* Wrap group */
.wrap-row1,
.wrap-row2 {
    display: grid;
    grid-template-columns: 48px 19px;
    align-items: center;
    justify-items: center;
}

.wrap-row1 {
    height: 48px;
}

.wrap-row2 {
    height: 36px;
    margin-top: 22px;
}

.ico-wrap {
    font-size: 20px;
    fill: #444;
}

/* Number group */
.select-num {
    width: 310px;
}

.num-row2 {
    margin-top: 22px;
    height: 36px;
    display: grid;
    grid-template-columns: 47px 26px 54px 52px 28px 52px 52px;
    align-items: center;
    justify-items: center;
}

.ico-cur {
    font-size: 9px;
    fill: #333;
}

.ico-dec {
    font-size: 18px;
    fill: #444;
}

.pct {
    font-size: 36px;
    line-height: 36px;
    color: #444;
}

.comma {
    font-family: "Liberation Serif", serif;
    font-size: 64px;
    font-weight: 700;
    line-height: 36px;
    height: 36px;
    margin-top: -42px;
    color: #444;
}

.ico-sort-a {
    font-size: 30px;
    fill: #3d85c6;
}

.ico-sort-z {
    font-size: 30px;
    fill: #444;
}

.xl-x {
    font-size: 11px;
    font-weight: 700;
    fill: #fff;
}

/* Formula bar */
.formula {
    height: 56px;
    flex: none;
    display: flex;
    align-items: center;
    border-top: 2px solid #ccc;
    border-bottom: 2px solid #ccc;
}

.namebox {
    width: 165px;
    height: 49px;
    display: flex;
    align-items: center;
    justify-content: space-between;
    padding: 0 2px 0 16px;
    background-color: #fff;
    border-right: 2px solid #e2e2e2;
    font-size: 24px;
    color: #333;
}

.fx-cancel {
    margin-left: 30px;
}

.fx-ok {
    margin-left: 31px;
}

.fx {
    width: 30px;
    margin-left: 31px;
    font-family: "Liberation Serif", serif;
    font-style: italic;
    font-size: 32px;
    color: #333;
}

.formula-input {
    flex: 1;
    height: 40px;
    margin-left: 15px;
    display: flex;
    justify-content: flex-end;
    background-color: #fff;
    border: 2px solid #d5d5d5;
    border-right: none;
}

.formula-drop {
    width: 46px;
    display: flex;
    align-items: center;
    justify-content: center;
    border-left: 2px solid #ddd;
    margin-right: 2px;
}

/* Workbook */
.workbook {
    position: relative;
    height: 1304px;
    flex: none;
}

.colhead {
    height: 30px;
    padding-top: 3px;
    border-bottom: 2px solid #b5b5b5;
}

.cols {
    height: 25px;
    display: flex;
    border-top: 1px solid #bbb;
    background: linear-gradient(#fff, #f6f6f6);
    font-size: 13px;
    line-height: 26px;
    color: #555;
}

.corner {
    width: 21px;
    flex: none;
    background-color: #f0f0f0;
    border-right: 2px solid #ddd;
}

.tiny-cols {
    width: 708px;
    flex: none;
    display: flex;
}

.tiny-cols span {
    width: 12px;
    flex: none;
    overflow: hidden;
    text-align: center;
    white-space: nowrap;
    border-right: 1px solid #ddd;
}

.col {
    width: 92px;
    flex: none;
    padding-left: 2px;
    text-align: center;
    border-right: 2px solid #e2e2e2;
}

.col-active {
    height: 27px;
    background: #f2f2f2;
    border-bottom: 4px solid #33724a;
    color: #33724a;
}

.sheet {
    height: 1274px;
    display: flex;
    background-color: #a0a0a0;
}

.rows {
    width: 22px;
    flex: none;
    display: flex;
    flex-direction: column;
}

.rows span {
    height: 16px;
    flex: none;
    display: flex;
    align-items: flex-end;
    justify-content: center;
    overflow: hidden;
    background-color: #fff;
    border-right: 2px solid #d8d8d8;
    border-bottom: 1px solid #e2e2e2;
    font-size: 12px;
    line-height: 15px;
    letter-spacing: -0.5px;
    color: #555;
}

.rows .r15 {
    height: 15px;
}

.rows .r22 {
    height: 22px;
}

.rows .r6 {
    height: 6px;
}

.rows .row-active {
    border-right: 4px solid #33724a;
    background-color: #eee;
}

/* Printed page */
.page {
    position: relative;
    width: 662px;
    height: 716px;
    flex: none;
    padding-left: 33px;
    background-color: #fff;
    border-style: solid;
    border-color: #0000cc;
    border-width: 2px 6px 6px 2px;
    color: #000;
}

.doc-title {
    margin: 0;
    height: 52px;
    line-height: 52px;
    text-align: center;
    font-size: 22px;
    font-weight: 300;
    color: #000;
}

.doc-intro {
    margin: 10px 0 15px;
    padding-left: 3px;
    font-size: 12px;
    line-height: 16px;
    color: #333;
    font-feature-settings: normal;
    white-space: nowrap;
}

.doc-table {
    width: 621px;
    table-layout: fixed;
    border-collapse: collapse;
    font-size: 12px;
    letter-spacing: -0.38px;
}

.doc-table tr {
    height: 22px;
}

.doc-table th,
.doc-table td {
    padding: 0;
    border: 2px dotted #111;
    border-right: none;
    line-height: 17px;
    vertical-align: top;
    white-space: nowrap;
    overflow: hidden;
}

.doc-table th {
    background-color: #eee;
    font-size: 12px;
    font-weight: 400;
    letter-spacing: 0;
    color: #333;
    font-feature-settings: normal;
}

.doc-table th.strong {
    font-weight: 700;
    color: #000;
}

.doc-table td {
    padding-left: 1px;
}

.col-label {
    width: 144px;
}

.name-val {
    display: inline-block;
    width: 325px;
}

.doc-table .label-text {
    font-size: 12px;
    letter-spacing: 0;
    color: #333;
    font-feature-settings: normal;
}

.doc-table .term {
    padding-left: 28px;
}

.term-start {
    display: inline-block;
    width: 169px;
    font-size: 6px;
}

.term-sep {
    display: inline-block;
    width: 28px;
}

.tiny {
    display: inline-block;
    width: 122px;
    font-size: 4px;
    letter-spacing: 0;
    color: #222;
}

.doc-zero {
    height: 19px;
    padding-left: 147px;
    padding-top: 5px;
    font-size: 12px;
    line-height: 14px;
}

.doc-table .low {
    vertical-align: bottom;
    text-align: center;
    line-height: 16px;
}

.doc-table .bank-row {
    height: 44px;
}

.doc-table .bank-name {
    padding: 0 0 4px;
    text-align: center;
    vertical-align: middle;
}

.company-table {
    margin-top: 21px;
}

.col-co-label {
    width: 96px;
}

.col-co-rest {
    width: 216px;
}

.doc-table .addr {
    vertical-align: bottom;
    font-weight: 500;
    letter-spacing: 0;
    line-height: 16px;
}

.watermark {
    position: absolute;
    left: 238px;
    top: 322px;
    font-size: 42px;
    letter-spacing: 9px;
    color: rgba(120, 120, 120, 0.75);
    white-space: nowrap;
}

/* Overlays on the sheet */
.red-frame {
    position: absolute;
    left: 2px;
    top: 13px;
    width: 720px;
    height: 746px;
    border: 6px solid #ee4326;
    border-radius: 32px;
}

.selected {
    position: absolute;
    left: 1094px;
    top: 248px;
    width: 98px;
    height: 28px;
    border: 5px solid #33724a;
    outline: 2px solid #fff;
    outline-offset: -7px;
}

.handle {
    position: absolute;
    right: -8px;
    bottom: -7px;
    width: 12px;
    height: 12px;
    background-color: #33724a;
    border-left: 2px solid #fff;
    border-top: 2px solid #fff;
}

.hscroll {
    position: absolute;
    left: 26px;
    top: 1278px;
    width: 2756px;
    height: 20px;
    background-color: #808080;
    border-radius: 10px;
}

/* Sheet tabs */
.sheet-tabs {
    height: 52px;
    flex: none;
    display: flex;
    align-items: flex-start;
    border-top: 2px solid #ccc;
    background-color: #efefef;
    font-size: 24px;
}

.arrow-l {
    margin: 14px 0 0 26px;
}

.arrow-r {
    margin: 14px 0 0 32px;
}

.sheet-tab {
    height: 41px;
    display: flex;
    align-items: center;
    justify-content: center;
    border-right: 2px solid #d4d4d4;
}

.sheet-tab.active {
    width: 186px;
    height: 45px;
    margin: -2px 0 0 32px;
    background-color: #fff;
    border-right: none;
    border-radius: 0 0 6px 6px;
    box-shadow: 0 2px 2px rgba(0, 0, 0, 0.3);
    color: #33724a;
}

.sheet-tab.data {
    width: 159px;
    color: #555;
}

.sheet-tab.add {
    width: 75px;
}

/* Status bar */
.status {
    height: 56px;
    flex: none;
    display: flex;
    align-items: center;
    padding: 0 0 2px 45px;
    border-top: 2px solid #c6c6c6;
    font-size: 22px;
    color: #555;
}

.a11y {
    margin: 0 13px 0 43px;
}

.a11y-text {
    letter-spacing: 1.5px;
}

.status-right {
    margin-left: auto;
    margin-right: 25px;
    display: grid;
    grid-template-columns: 56px 88px 60px 50px 200px 42px 109px;
    align-items: center;
    justify-items: center;
}

.view-active {
    width: 60px;
    height: 44px;
    display: flex;
    align-items: center;
    justify-content: center;
    background-color: #b8b8b8;
    border-radius: 5px;
}

.zoom-track {
    position: relative;
    width: 200px;
    height: 8px;
    background-color: #aaa;
    border-radius: 4px;
}

.zoom-knob {
    position: absolute;
    left: 47px;
    top: -13px;
    width: 32px;
    height: 32px;
    background-color: #fff;
    border-radius: 50%;
    box-shadow: 0 1px 2px rgba(0, 0, 0, 0.4);
}

.zoom-tick {
    position: absolute;
    left: 97px;
    top: 1px;
    width: 6px;
    height: 6px;
    background-color: #fff;
    border-radius: 50%;
}

.zoom-value {
    font-size: 24px;
}
```
